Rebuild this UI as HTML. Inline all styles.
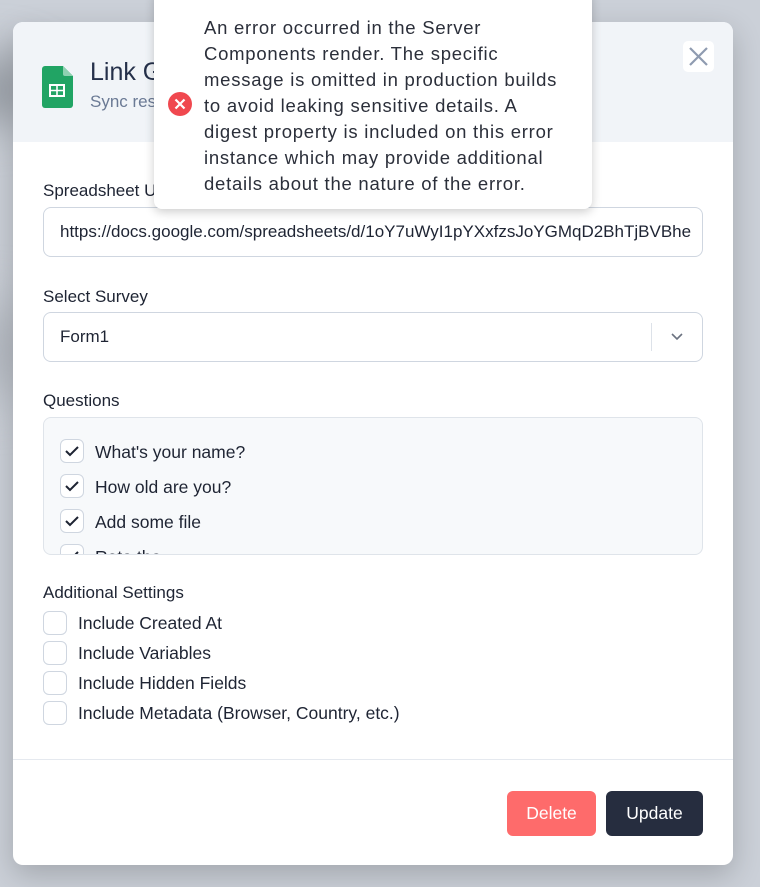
<!DOCTYPE html>
<html><head><meta charset="utf-8"><style>
*{box-sizing:border-box;margin:0;padding:0}
body{width:760px;height:887px;overflow:hidden;background:#cbd0d8;font-family:"Liberation Sans",sans-serif;color:#1e2433;position:relative}
.blur{position:absolute;border-radius:50%;filter:blur(25px)}
.modal{position:absolute;left:13px;top:22px;width:720px;height:843px;background:#fff;border-radius:10px;overflow:hidden;box-shadow:0 10px 30px rgba(0,0,0,.2)}
.hdr{position:absolute;left:0;top:0;width:720px;height:120px;background:#f1f4f8}
.abs{position:absolute}
.lbl{position:absolute;left:30px;font-size:17px;color:#1e2433}
.input{position:absolute;left:30px;width:660px;height:50px;border:1px solid #cfd6e0;border-radius:8px;font-size:17px;padding-left:16px;line-height:48px;white-space:nowrap;overflow:hidden}
.cb{position:absolute;width:24px;height:24px;border:1px solid #cfd6e0;border-radius:6px;background:#fff}
.q{position:absolute;left:51px;font-size:17.5px}
.btn{position:absolute;top:769px;height:45px;border-radius:6px;color:#fff;font-size:17.5px;text-align:center;line-height:45px}
</style></head><body>
<div class="blur" style="left:-60px;top:60px;width:100px;height:60px;background:#8e949c"></div>
<div class="blur" style="left:-40px;top:300px;width:70px;height:100px;background:#b0b5bd"></div>
<div class="modal">
<div class="hdr"></div>
<svg class="abs" style="left:29px;top:44px" width="31" height="42" viewBox="0 0 31 42"><path d="M3 0h18l10 10v29a3 3 0 0 1-3 3H3a3 3 0 0 1-3-3V3a3 3 0 0 1 3-3z" fill="#21a464"/><path d="M21 0l10 10h-8a2 2 0 0 1-2-2z" fill="#8ed1b1"/><rect x="8" y="19" width="14" height="11" fill="none" stroke="#fff" stroke-width="2"/><path d="M8 24.5h14M15 19v11" stroke="#fff" stroke-width="1.6"/></svg>
<div class="abs" style="left:77px;top:36px;font-size:25px;color:#25304a">Link Google Sheets</div>
<div class="abs" style="left:77px;top:70px;font-size:17px;color:#6b7a95">Sync responses</div>
<div class="abs" style="left:670px;top:19px;width:31px;height:31px;background:#fff;border-radius:5px"><svg width="31" height="31"><path d="M7 7l17 17M24 7L7 24" stroke="#8f9bb0" stroke-width="2.2"/></svg></div>
<div class="lbl" style="top:159px">Spreadsheet URL</div>
<div class="input" style="top:185px">https://docs.google.com/spreadsheets/d/1oY7uWyI1pYXxfzsJoYGMqD2BhTjBVBhe</div>
<div class="lbl" style="top:265px">Select Survey</div>
<div class="input" style="top:290px">Form1<div class="abs" style="left:607px;top:10px;width:1px;height:28px;background:#dde2e9"></div><svg class="abs" style="left:626px;top:18px" width="14" height="12"><path d="M2 3l5 5 5-5" fill="none" stroke="#6b7280" stroke-width="1.6"/></svg></div>
<div class="lbl" style="top:369px">Questions</div>
<div class="abs" style="left:30px;top:395px;width:660px;height:138px;background:#f7f9fb;border:1px solid #dfe4ea;border-radius:8px;overflow:hidden">
 <div class="cb" style="left:16px;top:21px"></div><div class="q" style="top:24px">What's your name?</div>
 <div class="cb" style="left:16px;top:56px"></div><div class="q" style="top:59px">How old are you?</div>
 <div class="cb" style="left:16px;top:91px"></div><div class="q" style="top:94px">Add some file</div>
 <div class="cb" style="left:16px;top:126px"></div><div class="q" style="top:129px">Rate the</div>
 <svg class="abs" style="left:16px;top:21px" width="24" height="140"><g fill="none" stroke="#1e2433" stroke-width="2"><path d="M6 12l4 4 8-8"/><path d="M6 47l4 4 8-8"/><path d="M6 82l4 4 8-8"/><path d="M6 117l4 4 8-8"/></g></svg>
</div>
<div class="lbl" style="top:561px">Additional Settings</div>
<div class="cb" style="left:30px;top:589px"></div><div class="abs" style="left:65px;top:591px;font-size:17.5px">Include Created At</div>
<div class="cb" style="left:30px;top:619px"></div><div class="abs" style="left:65px;top:621px;font-size:17.5px">Include Variables</div>
<div class="cb" style="left:30px;top:649px"></div><div class="abs" style="left:65px;top:651px;font-size:17.5px">Include Hidden Fields</div>
<div class="cb" style="left:30px;top:679px"></div><div class="abs" style="left:65px;top:681px;font-size:17.5px">Include Metadata (Browser, Country, etc.)</div>
<div class="abs" style="left:0;top:737px;width:720px;height:1px;background:#e5e9ef"></div>
<div class="btn" style="left:494px;width:89px;background:#fe6b6b">Delete</div>
<div class="btn" style="left:593px;width:97px;background:#262d3f">Update</div>
</div>
<div class="abs" style="left:154px;top:-10px;width:438px;height:219px;background:#fff;border-radius:8px;box-shadow:0 3px 10px rgba(0,0,0,.2)">
<svg class="abs" style="left:13px;top:101px" width="26" height="26"><circle cx="13" cy="13" r="12" fill="#f0484f"/><path d="M8.5 8.5l9 9M17.5 8.5l-9 9" stroke="#fff" stroke-width="2.2"/></svg>
<div class="abs" style="left:50px;top:25px;white-space:nowrap;font-size:18.5px;letter-spacing:0.75px;line-height:26px;color:#2b2f3a">An error occurred in the Server<br>Components render. The specific<br>message is omitted in production builds<br>to avoid leaking sensitive details. A<br>digest property is included on this error<br>instance which may provide additional<br>details about the nature of the error.</div>
</div>
</body></html>
